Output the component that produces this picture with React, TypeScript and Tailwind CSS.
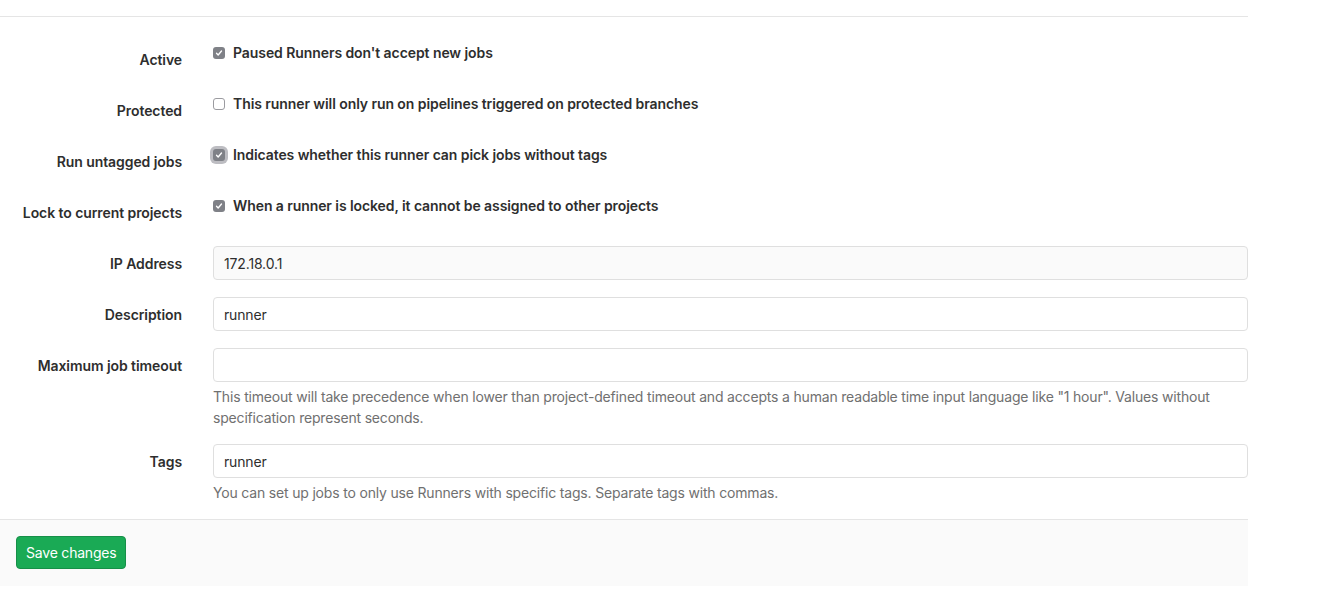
import { ReactNode } from "react";

const FONT = "font-['Inter','Liberation_Sans',sans-serif]";

function Check({ checked, focused }: { checked: boolean; focused?: boolean }) {
  if (!checked) {
    return (
      <span className="mt-[4px] inline-block h-[12px] w-[12px] shrink-0 rounded-[3px] border border-[#9b9ba0] bg-white" />
    );
  }
  return (
    <span
      className={`mt-[4px] inline-flex h-[12px] w-[12px] shrink-0 items-center justify-center rounded-[3px] bg-[#7f8187] ${
        focused ? "shadow-[0_0_0_3px_#bdbdc2]" : ""
      }`}
    >
      <svg viewBox="0 0 12 12" className="h-[10px] w-[10px]">
        <path d="M3 6.3l2 2.1 4-4.8" fill="none" stroke="#fff" strokeWidth="1.6" strokeLinecap="round" strokeLinejoin="round" />
      </svg>
    </span>
  );
}

function Row({ label, children, mb = "mb-[17px]" }: { label: string; children: ReactNode; mb?: string }) {
  return (
    <div className={`flex ${mb}`}>
      <div className="w-[213px] shrink-0 pr-[31px] pt-[8px] text-right text-[14px] leading-[20px] font-semibold tracking-[-0.08px] text-[#2e2e2e]">
        {label}
      </div>
      <div className="min-w-0 flex-1">{children}</div>
    </div>
  );
}

function CheckRow({ label, text, checked, focused }: { label: string; text: string; checked: boolean; focused?: boolean }) {
  return (
    <Row label={label}>
      <div className="flex h-[34px] items-start gap-[8px] pt-[1px]">
        <Check checked={checked} focused={focused} />
        <span className="text-[14px] leading-[20px] font-semibold tracking-[-0.08px] text-[#2e2e2e]">{text}</span>
      </div>
    </Row>
  );
}

function Input({ value, readOnly }: { value: string; readOnly?: boolean }) {
  return (
    <div
      className={`flex h-[34px] items-center rounded-[4px] border border-[#dfdfdf] px-[10px] pt-[1px] text-[14px] tracking-[-0.15px] text-[#2e2e2e] ${
        readOnly ? "bg-[#fafafa]" : "bg-white"
      }`}
    >
      {value}
    </div>
  );
}

function Help({ children }: { children: ReactNode }) {
  return <p className="mt-[4px] text-[14px] leading-[21px] tracking-[-0.18px] text-[#707070]">{children}</p>;
}

export default function App() {
  return (
    <div className={`${FONT} h-[593px] w-[1323px] bg-white`}>
      <div className="w-[1248px]">
        <div className="h-[17px] border-b border-[#e5e5e5]" />
        <div className="pt-[25px]">
          <CheckRow label="Active" text="Paused Runners don't accept new jobs" checked />
          <CheckRow label="Protected" text="This runner will only run on pipelines triggered on protected branches" checked={false} />
          <CheckRow label="Run untagged jobs" text="Indicates whether this runner can pick jobs without tags" checked focused />
          <CheckRow label="Lock to current projects" text="When a runner is locked, it cannot be assigned to other projects" checked />
          <Row label="IP Address">
            <Input value="172.18.0.1" readOnly />
          </Row>
          <Row label="Description">
            <Input value="runner" />
          </Row>
          <Row label="Maximum job timeout" mb="mb-[16px]">
            <Input value="" />
            <Help>
              This timeout will take precedence when lower than project-defined timeout and accepts a human readable time input
              language like "1 hour". Values without specification represent seconds.
            </Help>
          </Row>
          <Row label="Tags" mb="mb-[16px]">
            <Input value="runner" />
            <Help>You can set up jobs to only use Runners with specific tags. Separate tags with commas.</Help>
          </Row>
        </div>
        <div className="border-t border-[#e5e5e5] bg-[#fafafa] px-[16px] pt-[16px] pb-[17px]">
          <button className="h-[33px] rounded-[4px] border border-[#168f48] bg-[#1aaa55] px-[9px] text-[14px] tracking-[-0.2px] text-white">
            Save changes
          </button>
        </div>
      </div>
    </div>
  );
}
